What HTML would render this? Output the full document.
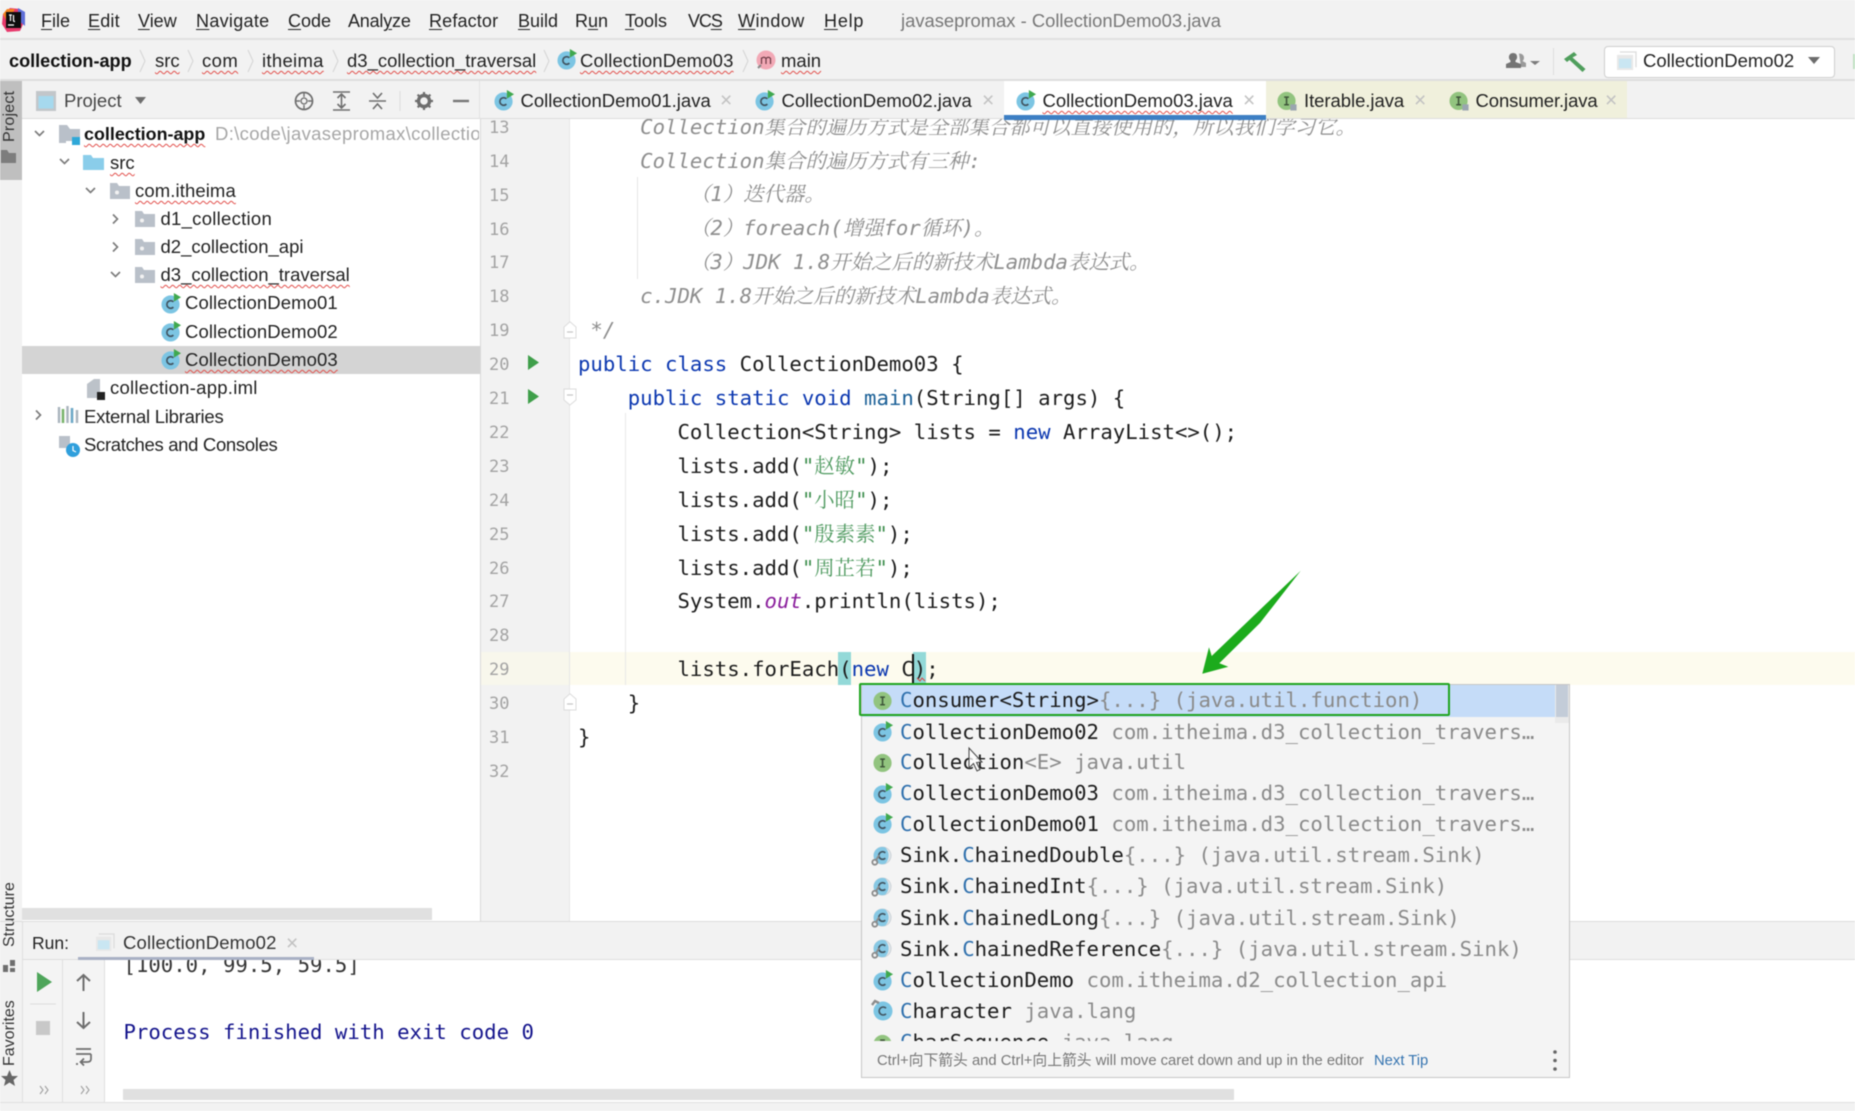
<!DOCTYPE html>
<html lang="en">
<head>
<meta charset="utf-8">
<title>javasepromax - CollectionDemo03.java</title>
<style>
html,body{margin:0;padding:0;background:#fff}
#r{position:relative;width:1855px;height:1111px;overflow:hidden;background:#fff;font-family:"Liberation Sans","Noto Sans CJK SC",sans-serif;font-size:18.5px;color:#222;filter:blur(.45px)}
.b{position:absolute}
.t{position:absolute;white-space:pre;line-height:30px;height:30px}
.m{font-size:18px;color:#222}
.m u{text-underline-offset:2px;text-decoration-thickness:1px}
.w{text-decoration:underline wavy #e2504c 1px;text-underline-offset:3px;text-decoration-skip-ink:none}
.c,.p,.k{font-family:"DejaVu Sans Mono","Noto Serif CJK SC",monospace;font-size:20.66px;white-space:pre;position:absolute;color:#1c1c1c}
.c{line-height:34px;height:34px;left:578px}
.g{color:#8e8e8e;font-style:italic}
.g i,.s i,.h i{font-family:"Noto Serif CJK SC",serif;font-size:20.4px}
.h i{font-style:italic}
.n{font-family:"DejaVu Sans Mono",monospace;font-size:17px;line-height:34px;height:34px;position:absolute;left:489px;width:24px;color:#a3a3a3;white-space:pre}
.kw{color:#0b37b0}
.s{color:#3f8f4f}
.s i{font-style:normal;color:#4f9a60}
.p{line-height:31px;height:31px;left:900px}
.p b{font-weight:normal;color:#2f70ad}
.p span{color:#8a8a8a}
.x{position:absolute;font-size:21px;line-height:24px;color:#c2c2c2;font-family:"Liberation Sans",sans-serif}
.v{position:absolute;transform-origin:0 0;transform:rotate(-90deg);white-space:pre;font-size:16px;line-height:18px;color:#333}
</style>
</head>
<body>
<div id="r">
<!-- base panels -->
<div class="b" style="left:0;top:0;width:1855px;height:119px;background:#f2f2f2"></div>
<div class="b" style="left:0;top:119px;width:22px;height:992px;background:#f2f2f2"></div>
<div class="b" style="left:481px;top:119px;width:88px;height:803px;background:#f2f2f2"></div>
<div class="b" style="left:569px;top:119px;width:1px;height:803px;background:#e6e6e6"></div>
<div class="b" style="left:480px;top:119px;width:1px;height:803px;background:#d9d9d9"></div>

<!-- caret row -->
<div class="b" style="left:481px;top:652px;width:88px;height:33px;background:#f8f7ec"></div>
<div class="b" style="left:570px;top:652px;width:1285px;height:33px;background:#fdfbee"></div>
<div class="b" style="left:838px;top:652px;width:13px;height:33px;background:#93d9d8"></div>
<div class="b" style="left:913px;top:652px;width:13px;height:33px;background:#93d9d8"></div>
<div class="b" style="left:637px;top:177px;width:1px;height:102px;background:#e6e6e6"></div>
<div class="b" style="left:625px;top:413px;width:1px;height:272px;background:#e8e8e8"></div>

<!-- line numbers -->
<div class="n" style="top:110.8px">13</div>
<div class="n" style="top:144.7px">14</div>
<div class="n" style="top:178.6px">15</div>
<div class="n" style="top:212.5px">16</div>
<div class="n" style="top:246.4px">17</div>
<div class="n" style="top:280.3px">18</div>
<div class="n" style="top:314.2px">19</div>
<div class="n" style="top:348.1px">20</div>
<div class="n" style="top:382px">21</div>
<div class="n" style="top:415.9px">22</div>
<div class="n" style="top:449.8px">23</div>
<div class="n" style="top:483.7px">24</div>
<div class="n" style="top:517.6px">25</div>
<div class="n" style="top:551.5px">26</div>
<div class="n" style="top:585.4px">27</div>
<div class="n" style="top:619.3px">28</div>
<div class="n" style="top:653.2px">29</div>
<div class="n" style="top:687.1px">30</div>
<div class="n" style="top:721px">31</div>
<div class="n" style="top:754.9px">32</div>

<!-- code -->
<div class="c g h" style="top:108.6px">     Collection<i>集合的遍历方式是全部集合都可以直接使用的，所以我们学习它。</i></div>
<div class="c g h" style="top:142.5px">     Collection<i>集合的遍历方式有三种</i>:</div>
<div class="c g h" style="top:176.4px">         <i>（</i>1<i>）迭代器。</i></div>
<div class="c g h" style="top:210.3px">         <i>（</i>2<i>）</i>foreach(<i>增强</i>for<i>循环</i>)<i>。</i></div>
<div class="c g h" style="top:244.2px">         <i>（</i>3<i>）</i>JDK 1.8<i>开始之后的新技术</i>Lambda<i>表达式。</i></div>
<div class="c g h" style="top:278.1px">     c.JDK 1.8<i>开始之后的新技术</i>Lambda<i>表达式。</i></div>
<div class="c g" style="top:313px"> */</div>
<div class="c" style="top:346.9px"><span class="kw">public class</span> CollectionDemo03 {</div>
<div class="c" style="top:380.8px">    <span class="kw">public static void</span> <span style="color:#1a5f96">main</span>(String[] args) {</div>
<div class="c" style="top:414.5px">        Collection&lt;String&gt; lists = <span class="kw">new</span> ArrayList&lt;&gt;();</div>
<div class="c" style="top:447.8px">        lists.add(<span class="s">"<i>赵敏</i>"</span>);</div>
<div class="c" style="top:481.7px">        lists.add(<span class="s">"<i>小昭</i>"</span>);</div>
<div class="c" style="top:515.6px">        lists.add(<span class="s">"<i>殷素素</i>"</span>);</div>
<div class="c" style="top:549.5px">        lists.add(<span class="s">"<i>周芷若</i>"</span>);</div>
<div class="c" style="top:583.6px">        System.<i style="color:#8a1d9c">out</i>.println(lists);</div>
<div class="c" style="top:651.8px">        lists.forEach(<span class="kw">new</span> C);</div>
<div class="c" style="top:685.9px">    }</div>
<div class="c" style="top:719.6px">}</div>
<div class="b" style="left:912px;top:654px;width:2px;height:29px;background:#111"></div>

<!-- header rows (paint over clipped line 13) -->
<div class="b" style="left:0;top:0;width:1855px;height:119px;background:#f2f2f2"></div>
<div class="b" style="left:0;top:38px;width:1855px;height:2px;background:#e0e0e0"></div>
<div class="b" style="left:0;top:79px;width:1855px;height:2px;background:#dedede"></div>
<div class="b" style="left:22px;top:118px;width:1833px;height:1px;background:#dcdcdc"></div>
<div class="b" style="left:0;top:81px;width:22px;height:99px;background:#bfbfbf"></div>
<div class="b" style="left:479px;top:81px;width:1px;height:38px;background:#e2e2e2"></div>

<!-- menu -->
<div class="t m" style="left:41px;top:6px"><u>F</u>ile</div>
<div class="t m" style="left:88px;top:6px;letter-spacing:.2px"><u>E</u>dit</div>
<div class="t m" style="left:138px;top:6px"><u>V</u>iew</div>
<div class="t m" style="left:196px;top:6px;letter-spacing:.3px"><u>N</u>avigate</div>
<div class="t m" style="left:288px;top:6px"><u>C</u>ode</div>
<div class="t m" style="left:348px;top:6px;letter-spacing:-.2px">Anal<u>y</u>ze</div>
<div class="t m" style="left:429px;top:6px;letter-spacing:.15px"><u>R</u>efactor</div>
<div class="t m" style="left:518px;top:6px"><u>B</u>uild</div>
<div class="t m" style="left:575px;top:6px">R<u>u</u>n</div>
<div class="t m" style="left:625px;top:6px"><u>T</u>ools</div>
<div class="t m" style="left:688px;top:6px;letter-spacing:-1.1px">VC<u>S</u></div>
<div class="t m" style="left:738px;top:6px;letter-spacing:.45px"><u>W</u>indow</div>
<div class="t m" style="left:824px;top:6px;letter-spacing:.8px"><u>H</u>elp</div>
<div class="t" style="left:901px;top:6px;color:#777;font-size:18.4px">javasepromax - CollectionDemo03.java</div>

<!-- breadcrumbs -->
<div class="t" style="left:9px;top:46px;font-weight:bold;font-size:18.1px;color:#111">collection-app</div>
<div class="t w" style="left:155px;top:46px">src</div>
<div class="t w" style="left:202px;top:46px;letter-spacing:.4px">com</div>
<div class="t w" style="left:262px;top:46px;letter-spacing:.3px">itheima</div>
<div class="t w" style="left:347px;top:46px">d3_collection_traversal</div>
<div class="t w" style="left:580px;top:46px;letter-spacing:.15px">CollectionDemo03</div>
<div class="t w" style="left:781px;top:46px">main</div>

<!-- combo -->
<div class="b" style="left:1604px;top:46px;width:229px;height:30px;background:#fff;border:1px solid #cfcfcf;border-radius:4px"></div>
<div class="t" style="left:1643px;top:46px;color:#222">CollectionDemo02</div>
<div class="b" style="left:1853px;top:54px;width:2px;height:15px;background:#bfe0c2"></div>

<!-- project header -->
<div class="t" style="left:64px;top:86px;color:#444">Project</div>

<!-- tabs -->
<div class="b" style="left:1004px;top:81px;width:262px;height:38px;background:#fff"></div>
<div class="b" style="left:1004px;top:115px;width:262px;height:5px;background:#3d7fc4"></div>
<div class="b" style="left:1266px;top:81px;width:361px;height:37px;background:#f0f0dc"></div>
<div class="t" style="left:520.5px;top:86px">CollectionDemo01.java</div>
<div class="x" style="left:720px;top:89px">×</div>
<div class="t" style="left:781.5px;top:86px">CollectionDemo02.java</div>
<div class="x" style="left:982px;top:89px">×</div>
<div class="t" style="left:1042.5px;top:86px"><span class="w">CollectionDemo03.java</span></div>
<div class="x" style="left:1243px;top:89px">×</div>
<div class="t" style="left:1304px;top:86px;letter-spacing:-.05px">Iterable.java</div>
<div class="x" style="left:1414px;top:89px">×</div>
<div class="t" style="left:1475.5px;top:86px;letter-spacing:-.1px">Consumer.java</div>
<div class="x" style="left:1605px;top:89px">×</div>

<!-- vertical labels -->
<div class="v" style="left:1px;top:142px;letter-spacing:.2px">Project</div>
<div class="v" style="left:1px;top:947px">Structure</div>
<div class="v" style="left:1px;top:1066px">Favorites</div>

<!-- tree -->
<div class="b" style="left:22px;top:346px;width:458px;height:28px;background:#d4d4d4"></div>
<div class="t" style="left:84px;top:119px;font-weight:bold;font-size:17.9px;color:#111"><span class="w">collection-app</span></div>
<div class="b" style="left:215px;top:119px;width:264px;height:30px;overflow:hidden"><div class="t" style="left:0;top:0;color:#a6a6a6;letter-spacing:.33px">D:\code\javasepromax\collection-app</div></div>
<div class="t" style="left:110px;top:148px"><span class="w">src</span></div>
<div class="t" style="left:135px;top:176px;letter-spacing:.1px"><span class="w">com.itheima</span></div>
<div class="t" style="left:160.5px;top:204px;letter-spacing:.27px">d1_collection</div>
<div class="t" style="left:160.5px;top:232px">d2_collection_api</div>
<div class="t" style="left:160.5px;top:260px"><span class="w">d3_collection_traversal</span></div>
<div class="t" style="left:185px;top:288px;letter-spacing:.1px">CollectionDemo01</div>
<div class="t" style="left:185px;top:316.5px;letter-spacing:.1px">CollectionDemo02</div>
<div class="t" style="left:185px;top:345px;letter-spacing:.1px"><span class="w">CollectionDemo03</span></div>
<div class="t" style="left:110px;top:373px;letter-spacing:.26px">collection-app.iml</div>
<div class="t" style="left:84px;top:401.5px;letter-spacing:-.25px">External Libraries</div>
<div class="t" style="left:84px;top:429.5px;letter-spacing:-.32px">Scratches and Consoles</div>
<div class="b" style="left:22px;top:908px;width:410px;height:12px;background:#e0e0e0"></div>

<!-- run panel -->
<div class="b" style="left:0;top:921px;width:1855px;height:1px;background:#dcdcdc"></div>
<div class="b" style="left:22px;top:922px;width:1833px;height:38px;background:#f2f2f2"></div>
<div class="b" style="left:22px;top:960px;width:82px;height:142px;background:#f4f4f4"></div>
<div class="b" style="left:62px;top:960px;width:1px;height:142px;background:#e0e0e0"></div>
<div class="b" style="left:104px;top:960px;width:1px;height:142px;background:#e0e0e0"></div>
<div class="b" style="left:22px;top:922px;width:1px;height:189px;background:#e0e0e0"></div>
<div class="b" style="left:105px;top:960px;width:1750px;height:142px;overflow:hidden;background:#fff">
  <div class="k" style="left:18.5px;top:-12px;line-height:34px;color:#333">[100.0, 99.5, 59.5]</div>
  <div class="k" style="left:18.5px;top:55px;line-height:34px;color:#14148c">Process finished with exit code 0</div>
  <div class="b" style="left:18px;top:129px;width:1111px;height:11px;background:#e0e0e0"></div>
</div>
<div class="b" style="left:22px;top:959px;width:1833px;height:1px;background:#dedede"></div>
<div class="b" style="left:78px;top:957px;width:236px;height:3px;background:#a8b0c4"></div>
<div class="t" style="left:32px;top:928px;font-size:17.5px;color:#222">Run:</div>
<div class="t" style="left:123px;top:928px;color:#333;letter-spacing:.15px">CollectionDemo02</div>
<div class="x" style="left:286px;top:932px">×</div>
<div class="b" style="left:0;top:1102px;width:1855px;height:9px;background:#f2f2f2;border-top:1px solid #e0e0e0;box-sizing:border-box"></div>

<!-- completion popup -->
<div class="b" style="left:861px;top:684px;width:707px;height:392px;background:#f4f4f4;border:1px solid #c6c6c6"></div>
<div class="b" style="left:862px;top:685px;width:693px;height:32px;background:#c5dcf8"></div>
<div class="b" style="left:1555px;top:685px;width:14px;height:38px;background:#eaeaea"></div>
<div class="b" style="left:1556px;top:685px;width:12px;height:32px;background:#c3ccd8"></div>
<div class="b" style="left:862px;top:685px;width:693px;height:356px;overflow:hidden">
  <div class="p" style="left:38px;top:-.4px"><b>C</b>onsumer&lt;String&gt;<span>{...} (java.util.function)</span></div>
  <div class="p" style="left:38px;top:31.8px"><b>C</b>ollectionDemo02 <span>com.itheima.d3_collection_travers…</span></div>
  <div class="p" style="left:38px;top:62px"><b>C</b>ollection<span>&lt;E&gt; java.util</span></div>
  <div class="p" style="left:38px;top:93.2px"><b>C</b>ollectionDemo03 <span>com.itheima.d3_collection_travers…</span></div>
  <div class="p" style="left:38px;top:124px"><b>C</b>ollectionDemo01 <span>com.itheima.d3_collection_travers…</span></div>
  <div class="p" style="left:38px;top:155.4px">Sink.<b>C</b>hainedDouble<span>{...} (java.util.stream.Sink)</span></div>
  <div class="p" style="left:38px;top:186.2px">Sink.<b>C</b>hainedInt<span>{...} (java.util.stream.Sink)</span></div>
  <div class="p" style="left:38px;top:217.8px">Sink.<b>C</b>hainedLong<span>{...} (java.util.stream.Sink)</span></div>
  <div class="p" style="left:38px;top:248.8px">Sink.<b>C</b>hainedReference<span>{...} (java.util.stream.Sink)</span></div>
  <div class="p" style="left:38px;top:280px"><b>C</b>ollectionDemo <span>com.itheima.d2_collection_api</span></div>
  <div class="p" style="left:38px;top:311px"><b>C</b>haracter <span>java.lang</span></div>
  <div class="p" style="left:38px;top:342px"><b>C</b>harSequence <span>java.lang</span></div>
</div>
<div class="t" style="left:877px;top:1046px;font-size:14.8px;color:#777">Ctrl+向下箭头 and Ctrl+向上箭头 will move caret down and up in the editor</div>
<div class="t" style="left:1374px;top:1046px;font-size:14.8px;color:#3574b0">Next Tip</div>
<div class="b" style="left:859px;top:683px;width:591px;height:33px;border:2px solid #1fa51f;border-radius:2px;box-sizing:border-box"></div>

<!-- all icons -->
<svg class="b" style="left:0;top:0" width="1855" height="1111" viewBox="0 0 1855 1111" fill="none">
<defs>
<symbol id="cc" viewBox="0 0 22 22" overflow="visible">
  <circle cx="10" cy="12" r="9.5" fill="#7cc5e3"/>
  <path d="M13 9.2A4 4 0 1 0 13 14.8" stroke="#40525e" stroke-width="1.7" fill="none"/>
  <path d="M13.5 0L21 4.5L13.5 9Z" fill="#3fa84e"/>
</symbol>
<symbol id="ci" viewBox="0 0 22 22" overflow="visible">
  <circle cx="10" cy="11.5" r="9.5" fill="#92c47f"/>
  <path d="M7.5 7.5H12.5M10 7.5V15.5M7.5 15.5H12.5" stroke="#3d5438" stroke-width="1.6"/>
</symbol>
<symbol id="cil" viewBox="0 0 22 22" overflow="visible">
  <circle cx="10" cy="11.5" r="9.5" fill="#92c47f"/>
  <path d="M7.5 7.5H12.5M10 7.5V15.5M7.5 15.5H12.5" stroke="#3d5438" stroke-width="1.6"/>
  <rect x="14" y="15" width="6.5" height="6.5" fill="#9aa5b0"/>
</symbol>
<symbol id="cs" viewBox="0 0 22 22" overflow="visible">
  <circle cx="12" cy="10" r="9" fill="#e2e6e9" stroke="#c4ccd2" stroke-width=".8"/>
  <path d="M15 1.6A9 9 0 1 0 15 18.4A12 12 0 0 0 15 1.6Z" fill="#86c8e4"/>
  <path d="M15 7.2A4 4 0 1 0 15 12.8" stroke="#40525e" stroke-width="1.7" fill="none"/>
  <circle cx="4" cy="17" r="2.6" stroke="#8a8a8a" stroke-width="1.9" fill="none"/>
  <path d="M5.5 14.5L8.5 9.5" stroke="#8a8a8a" stroke-width="2"/>
</symbol>
<symbol id="pk" viewBox="0 0 20 16" overflow="visible">
  <path d="M0 0H7L9 3H20V16H0Z" fill="#b9c0c9"/>
  <circle cx="7" cy="9.5" r="2" fill="#f2f2f2"/>
</symbol>
<symbol id="ch" viewBox="0 0 12 12" overflow="visible">
  <path d="M2 3L6.5 7.5L11 3" stroke="#7a7a7a" stroke-width="1.6" fill="none"/>
</symbol>
<symbol id="cr" viewBox="0 0 12 12" overflow="visible">
  <path d="M3 1.5L7.5 6L3 10.5" stroke="#7a7a7a" stroke-width="1.6" fill="none"/>
</symbol>
<symbol id="sp" viewBox="0 0 8 24" overflow="visible">
  <path d="M1 1L6 12L1 23" stroke="#d4d4d4" stroke-width="1" fill="none"/>
</symbol>
<symbol id="win" viewBox="0 0 20 20" overflow="visible">
  <path d="M3 0H20V16" stroke="#dcdcdc" stroke-width="1.4"/>
  <rect x="0" y="3" width="17" height="16" fill="#e8e8e8"/>
  <rect x="2" y="7" width="13" height="10" fill="#c9e6f2"/>
</symbol>
<symbol id="fold" viewBox="0 0 14 18" overflow="visible">
  <path d="M1 6L7 .8L13 6V17H1Z" fill="#fff" stroke="#dcdcdc"/>
  <path d="M4 11H10" stroke="#c4c4c4" stroke-width="1.2"/>
</symbol>
<symbol id="foldd" viewBox="0 0 14 18" overflow="visible">
  <path d="M1 1H13V12L7 17L1 12Z" fill="#fff" stroke="#dcdcdc"/>
  <path d="M4 7H10" stroke="#c4c4c4" stroke-width="1.2"/>
</symbol>
<clipPath id="clipr"><rect x="862" y="685" width="693" height="356"/></clipPath>
</defs>

<!-- logo -->
<path d="M3 14L10 8L20 9L25 20L20 31L7 32L2 24Z" fill="#e8396c"/>
<path d="M3 14L7 9L15 9L7 22Z" fill="#f58220"/>
<path d="M18 8L25 12L25 26L18 20Z" fill="#5f6fd8"/>
<rect x="6" y="12" width="15" height="16" fill="#0d0d0d"/>
<path d="M8 25H14" stroke="#fff" stroke-width="1.3"/>
<path d="M9 15H12M10.5 15V21M13.5 15V20.5Q13.5 21.5 15 21.5" stroke="#fff" stroke-width="1.2"/>

<!-- breadcrumb chevrons -->
<use href="#sp" x="139" y="49" width="8" height="24"/>
<use href="#sp" x="187" y="49" width="8" height="24"/>
<use href="#sp" x="247" y="49" width="8" height="24"/>
<use href="#sp" x="332" y="49" width="8" height="24"/>
<use href="#sp" x="543" y="49" width="8" height="24"/>
<use href="#sp" x="742" y="49" width="8" height="24"/>
<use href="#cc" x="557" y="49" width="21" height="21"/>
<circle cx="766" cy="60" r="9.5" fill="#f2a9b6"/>
<path d="M761.5 64V57.5M761.5 58.5Q764 56 766 58.5V64M766 58.5Q768.5 56 770.5 58.5V64" stroke="#6b3a44" stroke-width="1.2"/>
<path d="M758 68L761 65" stroke="#888" stroke-width="2"/>

<!-- right toolbar -->
<path d="M1519 53.500Q1523.500 53.500 1524 57.500Q1524 60 1522.500 61L1526 63V67H1521Z" fill="#9a9a9a"/>
<path d="M1506 68V64L1510.500 62V60.500Q1508.500 59 1509 56Q1510 53 1513 53Q1516.500 53 1517 56Q1517.500 59 1515.500 60.500V62L1521 64V68Z" fill="#757575"/>
<path d="M1530 61H1540L1535 65Z" fill="#7c7c7c"/>
<path d="M1553.500 48V75" stroke="#dedede"/>
<path d="M1564 59L1574 52L1577 55L1572.500 57.500L1585.500 69L1582.500 72L1569.500 60L1567 62Z" fill="#4f9e5c"/>
<use href="#win" x="1617" y="52" width="19" height="19"/>
<path d="M1808 57H1820L1814 64Z" fill="#6c6c6c"/>

<!-- project header icons -->
<rect x="36" y="91" width="20" height="20" fill="#c2c6ca"/>
<rect x="38.500" y="96" width="15" height="12.500" fill="#a6d9ee"/>
<path d="M135 97H146L140.500 104Z" fill="#6e6e6e"/>
<circle cx="304" cy="101" r="8.500" stroke="#6e6e6e" stroke-width="1.700"/>
<circle cx="304" cy="101" r="3" stroke="#6e6e6e" stroke-width="1.300"/>
<path d="M304 92V97M304 105V110M295 101H300M308 101H313" stroke="#6e6e6e" stroke-width="1.400"/>
<path d="M333 92H350M333 110H350M337.500 98L341.500 94L345.500 98M337.500 104L341.500 108L345.500 104M341.500 95V107" stroke="#6e6e6e" stroke-width="1.600"/>
<path d="M369 101H386M373 93L377.500 98L382 93M373 109L377.500 104L382 109" stroke="#6e6e6e" stroke-width="1.600"/>
<path d="M400 91V111" stroke="#dcdcdc"/>
<circle cx="424" cy="101" r="5.500" stroke="#6e6e6e" stroke-width="3.400"/>
<path d="M424 92V110M415 101H433M417.600 94.600L430.400 107.400M430.400 94.600L417.600 107.400" stroke="#6e6e6e" stroke-width="2.200" stroke-dasharray="3.200 11.600"/>
<path d="M453 101H469" stroke="#777" stroke-width="2.400"/>

<!-- tab icons -->
<use href="#cc" x="494" y="90" width="21" height="21"/>
<use href="#cc" x="755" y="90" width="21" height="21"/>
<use href="#cc" x="1016" y="90" width="21" height="21"/>
<use href="#cil" x="1277" y="90" width="21" height="21"/>
<use href="#cil" x="1449" y="90" width="21" height="21"/>

<!-- left stripe icons -->
<path d="M1 150H7L9 153H16V163H1Z" fill="#7d7d7d"/>
<path d="M3 965H8V972H3ZM10 960H15V966H10ZM10 968H15V972H10Z" fill="#6e6e6e"/>
<path d="M9.500 1070L12 1076H18L13.500 1080L15 1086L9.500 1082.500L4 1086L5.500 1080L1 1076H7Z" fill="#666"/>

<!-- tree arrows -->
<use href="#ch" x="33" y="128" width="12" height="12"/>
<use href="#ch" x="58" y="156" width="12" height="12"/>
<use href="#ch" x="84" y="185" width="12" height="12"/>
<use href="#cr" x="110" y="213" width="12" height="12"/>
<use href="#cr" x="110" y="241" width="12" height="12"/>
<use href="#ch" x="109" y="269" width="12" height="12"/>
<use href="#cr" x="33" y="409" width="12" height="12"/>

<!-- tree icons -->
<path d="M59 125H67L70 129H80V141H66V143H59Z" fill="#b9c0c9"/>
<rect x="72" y="137" width="8" height="8" fill="#2fa8d8"/>
<path d="M83 155H91L93 158H104V170H83Z" fill="#8acdea"/>
<use href="#pk" x="110" y="183" width="20" height="16"/>
<use href="#pk" x="135" y="211" width="20" height="16"/>
<use href="#pk" x="135" y="239" width="20" height="16"/>
<use href="#pk" x="135" y="267" width="20" height="16"/>
<use href="#cc" x="161" y="293" width="21" height="21"/>
<use href="#cc" x="161" y="321" width="21" height="21"/>
<use href="#cc" x="161" y="349" width="21" height="21"/>
<path d="M87 384L94 379H100V398H87Z" fill="#bcc2c9"/>
<rect x="97" y="392" width="8" height="8" fill="#222"/>
<path d="M59 407V423M63 409V423M67.500 406V423M72 408V423M77 410V423" stroke="#a9b3bd" stroke-width="2.400"/>
<path d="M63 409V423" stroke="#79b46a" stroke-width="2.400"/>
<path d="M72 408V423" stroke="#6ba8c8" stroke-width="2.400"/>
<path d="M59 436H70V444L66 448H59Z" fill="#b9c0c9"/>
<circle cx="73" cy="450" r="7" fill="#2f9fdc"/>
<path d="M73 446V450.500L76 452" stroke="#fff" stroke-width="1.200"/>

<!-- gutter -->
<path d="M528 355L539 362.500L528 370Z" fill="#3f9f4a"/>
<path d="M528 389L539 396.500L528 404Z" fill="#3f9f4a"/>
<use href="#fold" x="563" y="321" width="14" height="18"/>
<use href="#foldd" x="563" y="388" width="14" height="18"/>
<use href="#fold" x="563" y="693" width="14" height="18"/>
<path d="M917 678L920 681L922 678L925 681" stroke="#e04040" stroke-width="1"/>

<!-- run panel icons -->
<use href="#win" x="96" y="934" width="18" height="18"/>
<path d="M37 972L52 982L37 992Z" fill="#4ea55a"/>
<path d="M30 1004H56" stroke="#dcdcdc" stroke-width="1"/>
<rect x="36" y="1021" width="14" height="14" fill="#c8c8c8"/>
<path d="M83.500 991V975M77 981L83.500 975L90 981M83.500 1028V1012M77 1022L83.500 1028L90 1022" stroke="#6e6e6e" stroke-width="2"/>
<path d="M76 1049H91M76 1054H91M91 1054V1059Q91 1062 87 1062H81M84 1058.500L80.500 1062L84 1065.500M76 1064H78" stroke="#6e6e6e" stroke-width="1.700"/>
<path d="M40 1086L43 1090L40 1094M45 1086L48 1090L45 1094M81 1086L84 1090L81 1094M86 1086L89 1090L86 1094" stroke="#a0a0a0" stroke-width="1.100"/>

<!-- popup icons -->
<use href="#ci" x="873" y="690" width="21" height="21"/>
<use href="#cc" x="873" y="721" width="21" height="21"/>
<use href="#ci" x="873" y="752" width="21" height="21"/>
<use href="#cc" x="873" y="783" width="21" height="21"/>
<use href="#cc" x="873" y="813" width="21" height="21"/>
<use href="#cs" x="871" y="846" width="21" height="21"/>
<use href="#cs" x="871" y="877" width="21" height="21"/>
<use href="#cs" x="871" y="908" width="21" height="21"/>
<use href="#cs" x="871" y="939" width="21" height="21"/>
<use href="#cc" x="873" y="970" width="21" height="21"/>
<circle cx="883" cy="1011" r="9.500" fill="#7cc5e3"/>
<path d="M886 1008.200A4 4 0 1 0 886 1013.800" stroke="#40525e" stroke-width="1.600"/>
<path d="M872 1005L875 1001L879 1003" stroke="#8c8c8c" stroke-width="2.400"/>
<g clip-path="url(#clipr)"><use href="#ci" x="873" y="1033" width="21" height="21"/></g>
<circle cx="1555" cy="1052" r="1.800" fill="#666"/>
<circle cx="1555" cy="1060.500" r="1.800" fill="#666"/>
<circle cx="1555" cy="1069" r="1.800" fill="#666"/>

<!-- mouse pointer -->
<path d="M969 748V768L973.500 763.500L977 771L980 769.500L976.500 762.500L982 762Z" fill="#fff" fill-opacity=".75" stroke="#444" stroke-width="1"/>

<!-- annotation arrow -->
<path d="M1300.700 570.700L1260 623L1219.300 663.300L1228.300 666.700L1202.300 673.700L1209 647.300L1211.700 656Z" fill="#1cab1c"/>
</svg>
</div>
</body>
</html>
